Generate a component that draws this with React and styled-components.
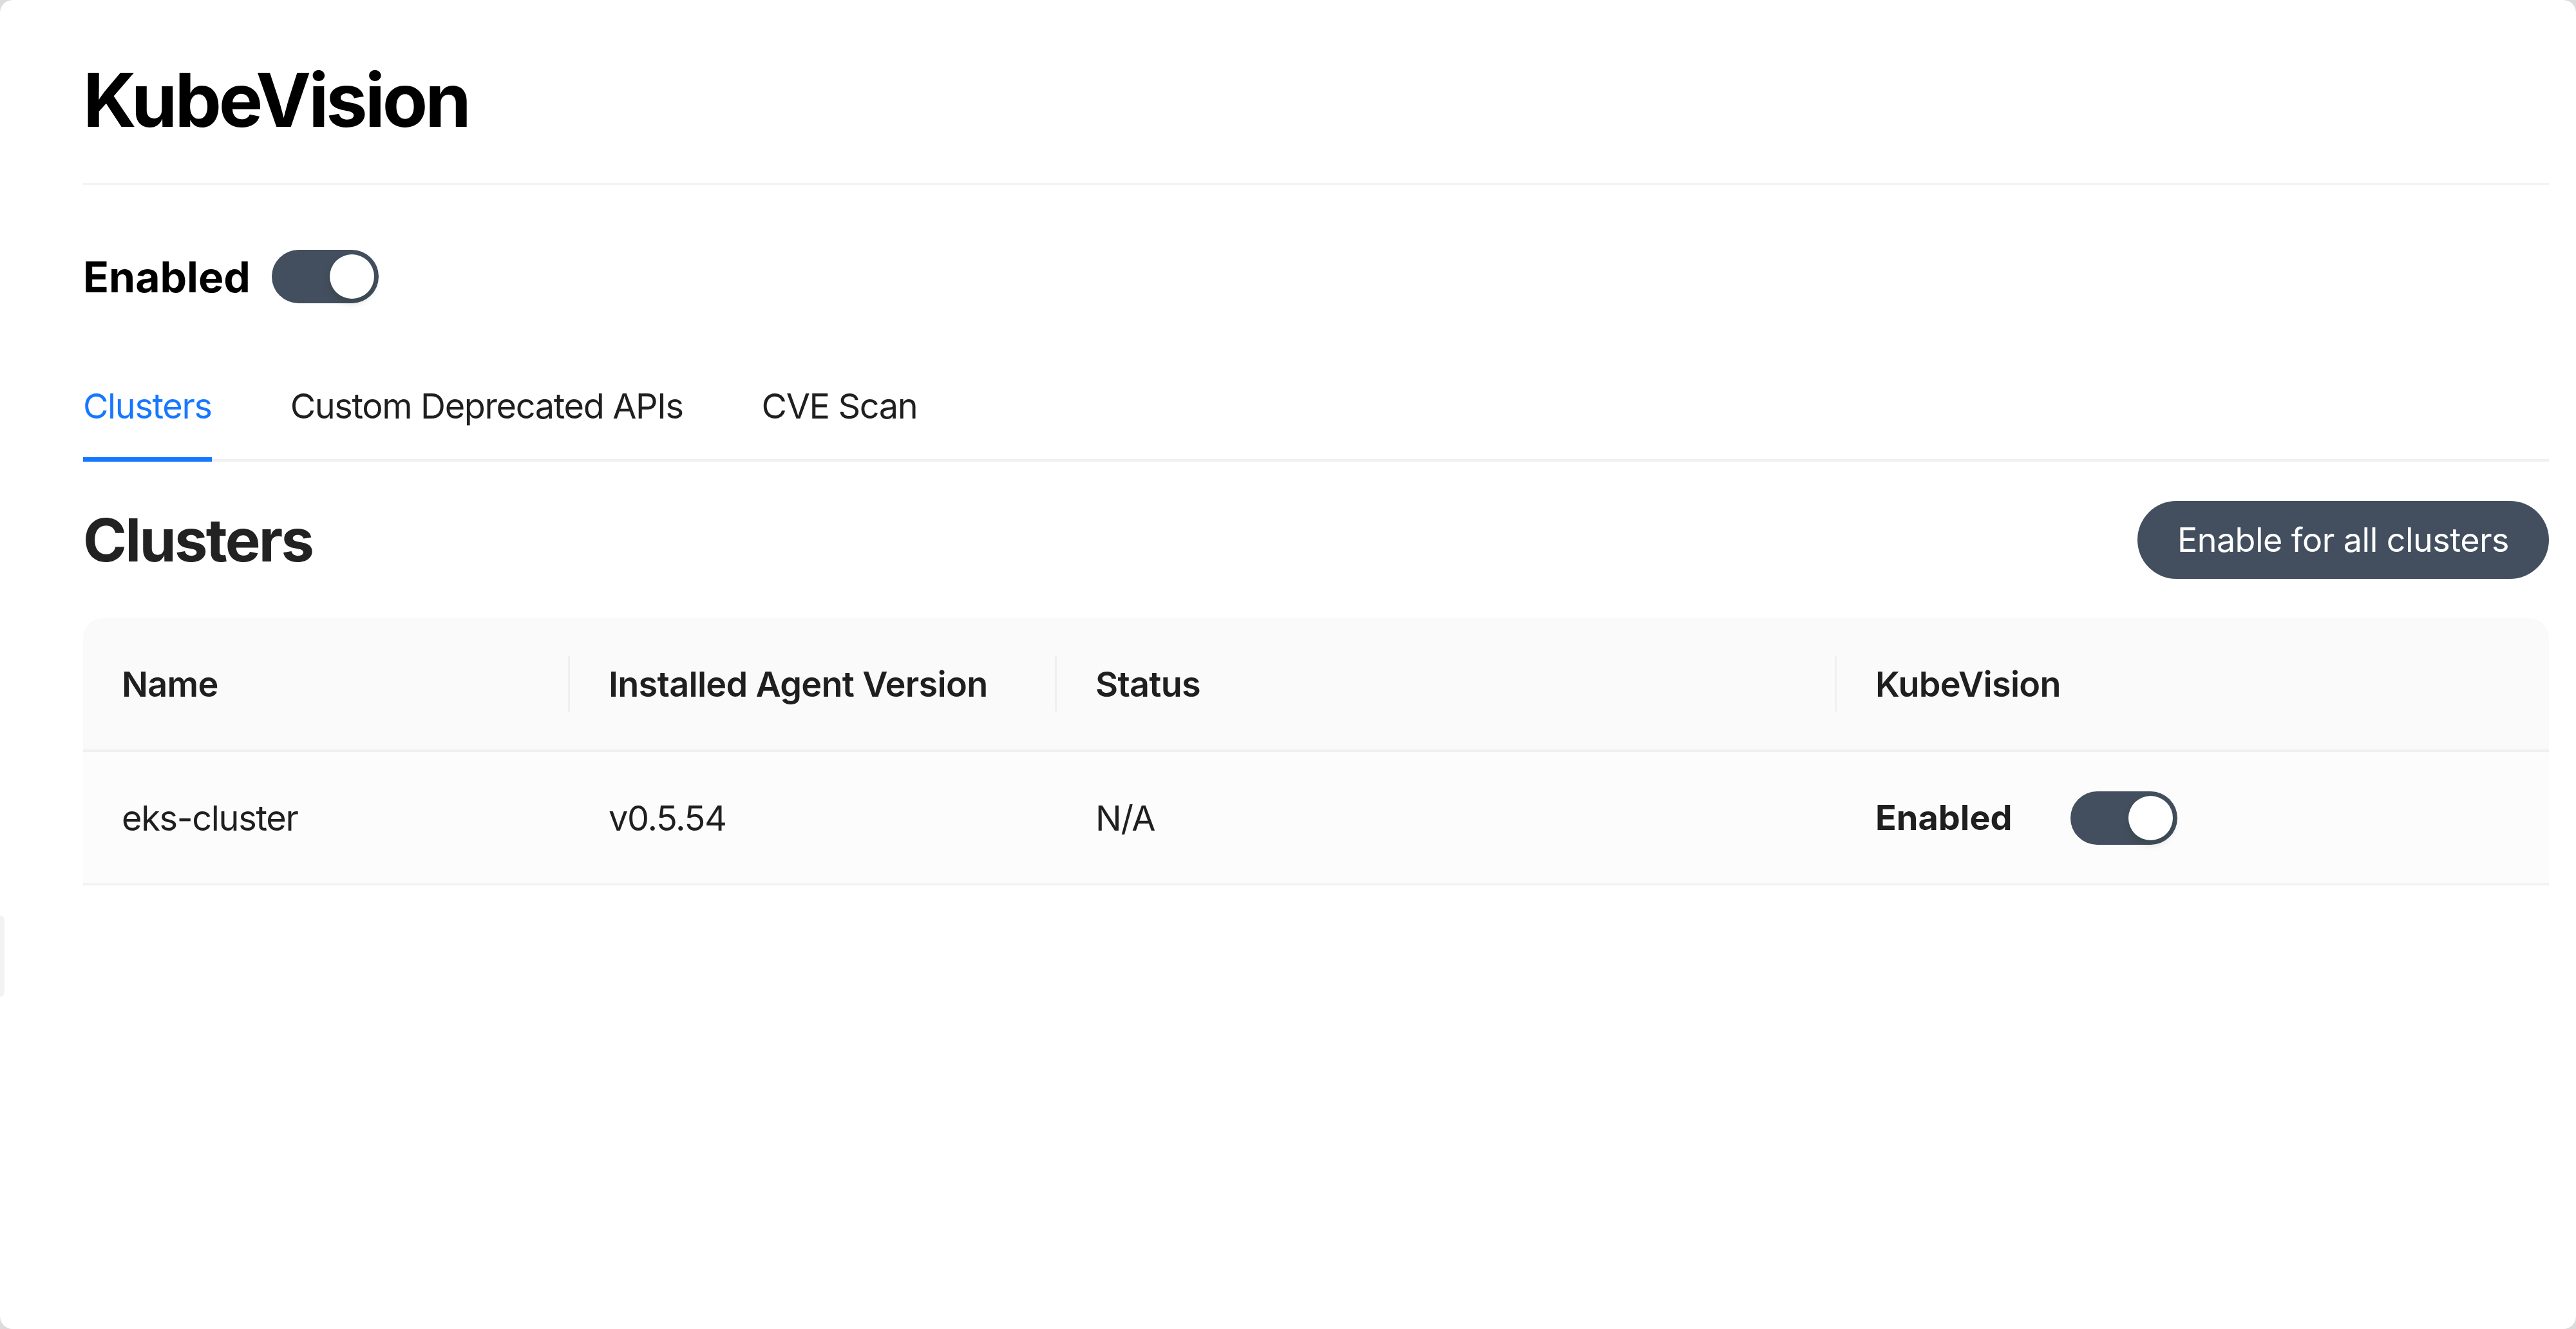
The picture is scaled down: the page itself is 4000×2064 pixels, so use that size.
import React from "react";
import styled, { createGlobalStyle } from "styled-components";

const GlobalStyle = createGlobalStyle`
  html, body {
    margin: 0;
    padding: 0;
    background: #dcdcdc;
  }
  body {
    font-family: Inter, "Noto Sans", "Liberation Sans", sans-serif;
    color: #1f1f1f;
  }
  * {
    box-sizing: border-box;
  }
`;

const Window = styled.div`
  position: relative;
  width: 4000px;
  height: 2064px;
  background: #ffffff;
  border-radius: 20px;
  overflow: hidden;
  padding: 98px 42px 0 129px;
`;

const SideHandle = styled.div`
  position: absolute;
  left: 0;
  top: 1422px;
  width: 7px;
  height: 126px;
  border-radius: 0 8px 8px 0;
  background: #f1f2f4;
`;

const Title = styled.h1`
  margin: 0;
  font-weight: 700;
  font-size: 115px;
  line-height: 115px;
  letter-spacing: -0.035em;
  color: #000;
`;

const Divider = styled.div`
  height: 3px;
  margin-top: 71px;
  background: #f2f3f5;
`;

const EnabledRow = styled.div`
  display: flex;
  align-items: center;
  gap: 33px;
  margin-top: 101px;
`;

const EnabledLabel = styled.span`
  font-weight: 700;
  font-size: ${(p) => p.$size}px;
  line-height: ${(p) => p.$size}px;
  letter-spacing: 0;
  color: ${(p) => p.$color};
`;

const Track = styled.button`
  position: relative;
  flex: none;
  width: 166px;
  height: 83px;
  padding: 0;
  border: none;
  border-radius: 42px;
  background: #434f5e;
  cursor: pointer;
`;

const Knob = styled.span`
  position: absolute;
  top: 7px;
  right: 7px;
  width: 69px;
  height: 69px;
  border-radius: 50%;
  background: #ffffff;
  box-shadow: 0 6px 12px rgba(0, 35, 11, 0.18);
`;

const Toggle = () => (
  <Track aria-pressed="true">
    <Knob />
  </Track>
);

const TabList = styled.div`
  display: flex;
  gap: 122px;
  margin-top: 133px;
  border-bottom: 4px solid #f0f0f0;
`;

const Tab = styled.div`
  position: relative;
  padding-bottom: 55px;
  font-size: 54px;
  line-height: 54px;
  font-weight: 400;
  letter-spacing: -0.025em;
  color: ${(p) => (p.$active ? "#1677ff" : "#1f1f1f")};
  cursor: pointer;

  &::after {
    content: "";
    display: ${(p) => (p.$active ? "block" : "none")};
    position: absolute;
    left: 0;
    right: 0;
    bottom: -4px;
    height: 7px;
    background: #1677ff;
  }
`;

const SectionHeader = styled.div`
  display: flex;
  align-items: center;
  justify-content: space-between;
  margin-top: 61px;
`;

const Heading = styled.h2`
  margin: 0;
  font-size: 92px;
  line-height: 92px;
  font-weight: 700;
  letter-spacing: -0.03em;
  color: #222222;
`;

const PrimaryButton = styled.button`
  height: 121px;
  padding: 0 62px;
  border: none;
  border-radius: 61px;
  background: #434f5e;
  color: #ffffff;
  font-family: inherit;
  font-size: 52px;
  font-weight: 400;
  letter-spacing: -0.01em;
  cursor: pointer;
`;

const Table = styled.div`
  margin-top: 61px;
  border-radius: 30px 30px 0 0;
  overflow: hidden;
`;

const Row = styled.div`
  display: grid;
  grid-template-columns: 756px 756px 1211px 1fr;
  height: ${(p) => (p.$head ? 208 : 207)}px;
  background: ${(p) => (p.$head ? "#fafafa" : "#fcfcfc")};
  border-bottom: ${(p) => (p.$head ? 4 : 3)}px solid #f0f0f0;
`;

const HeadCell = styled.div`
  position: relative;
  display: flex;
  align-items: center;
  padding: 0 60px;
  font-size: 54px;
  font-weight: 600;
  letter-spacing: -0.013em;
  color: #1f1f1f;

  &:not(:last-child)::before {
    content: "";
    position: absolute;
    right: 0;
    top: 50%;
    width: 3px;
    height: 87px;
    transform: translateY(-50%);
    background: #f0f0f0;
  }
`;

const Cell = styled.div`
  display: flex;
  align-items: center;
  gap: 90px;
  padding: 0 60px;
  font-size: 54px;
  font-weight: 400;
  letter-spacing: -0.024em;
  color: #1f1f1f;
`;

const columns = ["Name", "Installed Agent Version", "Status", "KubeVision"];

const clusters = [{ name: "eks-cluster", version: "v0.5.54", status: "N/A" }];

export default function App() {
  return (
    <>
      <GlobalStyle />
      <Window>
        <SideHandle />
        <Title>KubeVision</Title>
        <Divider />
        <EnabledRow>
          <EnabledLabel $size={66} $color="#000">
            Enabled
          </EnabledLabel>
          <Toggle />
        </EnabledRow>
        <TabList>
          <Tab $active>Clusters</Tab>
          <Tab>Custom Deprecated APIs</Tab>
          <Tab>CVE Scan</Tab>
        </TabList>
        <SectionHeader>
          <Heading>Clusters</Heading>
          <PrimaryButton>Enable for all clusters</PrimaryButton>
        </SectionHeader>
        <Table>
          <Row $head>
            {columns.map((c) => (
              <HeadCell key={c}>{c}</HeadCell>
            ))}
          </Row>
          {clusters.map((c) => (
            <Row key={c.name}>
              <Cell>{c.name}</Cell>
              <Cell>{c.version}</Cell>
              <Cell>{c.status}</Cell>
              <Cell>
                <EnabledLabel $size={54} $color="#1f1f1f">
                  Enabled
                </EnabledLabel>
                <Toggle />
              </Cell>
            </Row>
          ))}
        </Table>
      </Window>
    </>
  );
}
